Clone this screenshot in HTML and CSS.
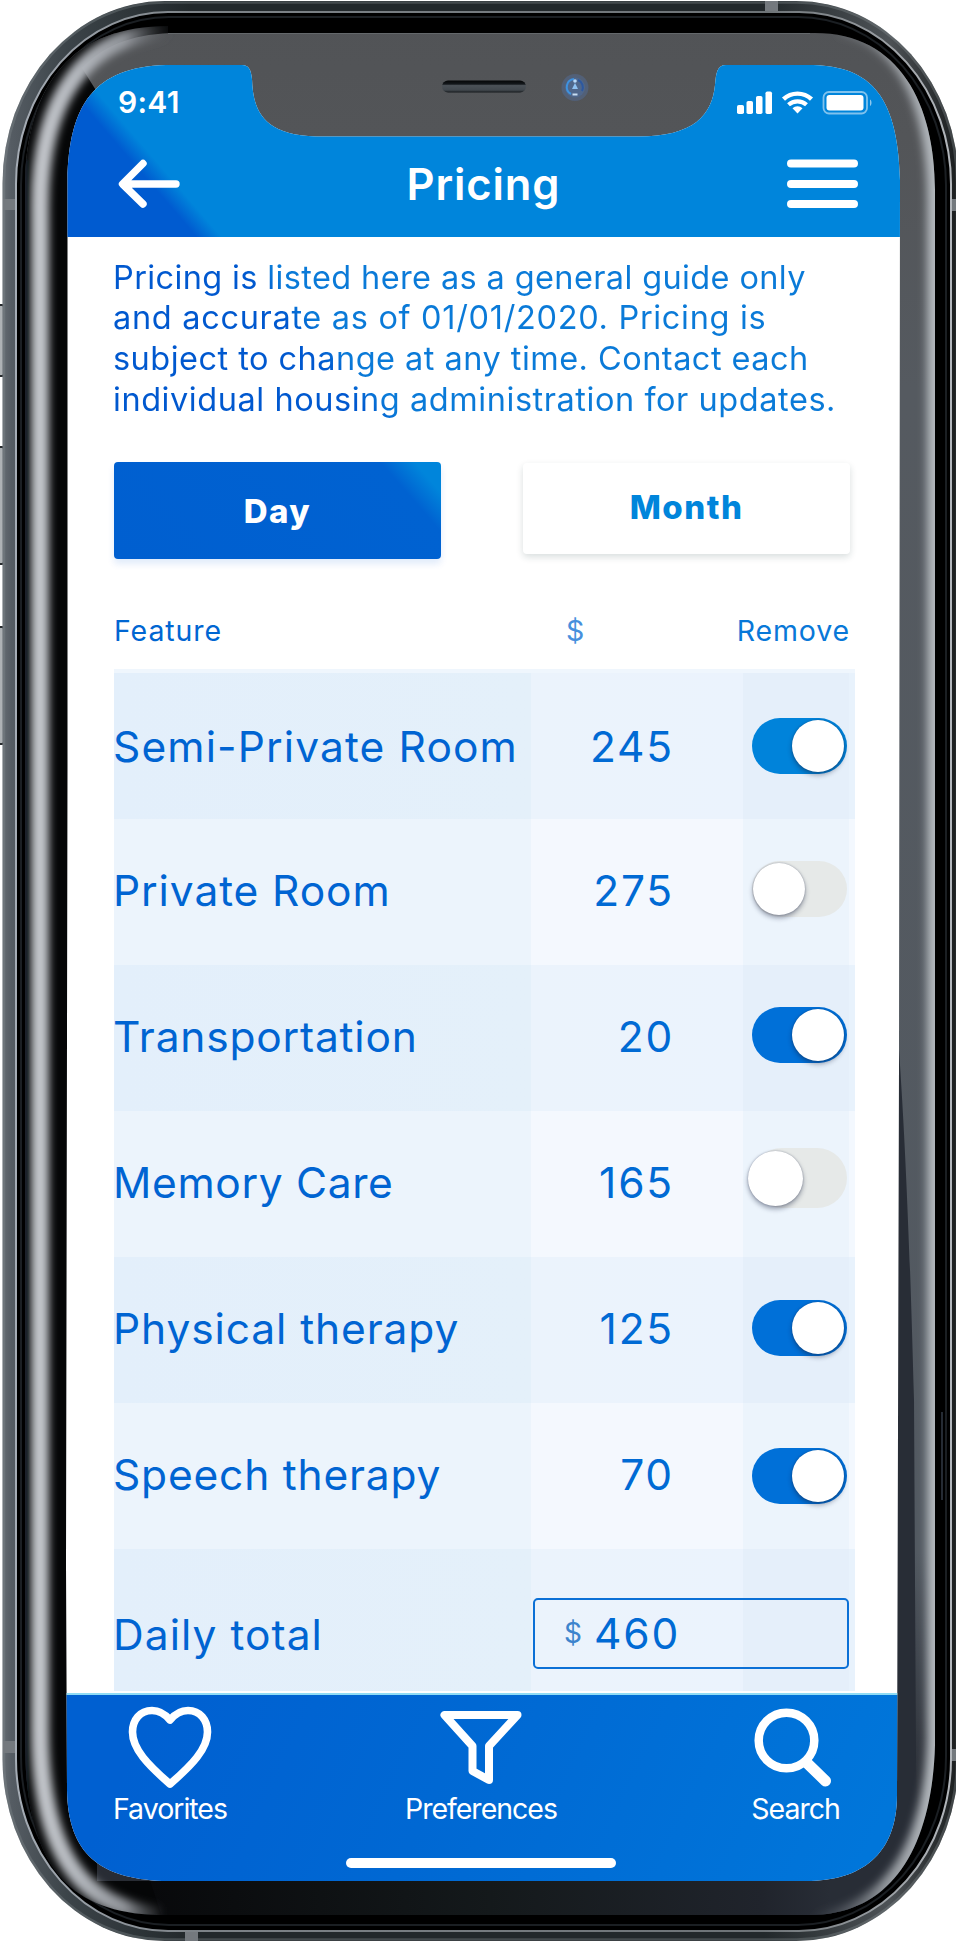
FILE: index.html
```html
<!DOCTYPE html>
<html lang="en">
<head>
<meta charset="utf-8">
<title>Pricing</title>
<link rel="stylesheet" href="styles.css">
</head>
<body>
<div class="phone">
  <svg class="frame" viewBox="0 0 956 1941" aria-hidden="true">
    <defs>
      <linearGradient id="metal" x1="0" x2="956" y1="0" y2="0" gradientUnits="userSpaceOnUse">
        <stop offset="0" stop-color="#6a7077"/><stop offset=".012" stop-color="#555c63"/>
        <stop offset=".07" stop-color="#3c4449"/><stop offset=".2" stop-color="#22282b"/>
        <stop offset=".8" stop-color="#22282b"/><stop offset=".93" stop-color="#4d5256"/><stop offset="1" stop-color="#1c1f20"/>
      </linearGradient>
      <linearGradient id="edge" x1="0" x2="956" y1="0" y2="0" gradientUnits="userSpaceOnUse">
        <stop offset="0" stop-color="#a9b0b9"/><stop offset=".2" stop-color="#7d8388"/>
        <stop offset=".8" stop-color="#6d7377"/><stop offset="1" stop-color="#b4b8bd"/>
      </linearGradient>
      <linearGradient id="bezel" x1="0" x2="0" y1="0" y2="1941" gradientUnits="userSpaceOnUse">
        <stop offset="0" stop-color="#515356"/><stop offset=".07" stop-color="#535558"/>
        <stop offset=".2" stop-color="#555a60"/><stop offset=".8" stop-color="#525961"/><stop offset=".93" stop-color="#282c34"/>
      </linearGradient>
      <linearGradient id="chin" x1="150" x2="830" y1="0" y2="0" gradientUnits="userSpaceOnUse">
        <stop offset="0" stop-color="#08090b"/><stop offset=".5" stop-color="#14191b"/><stop offset=".9" stop-color="#20242c"/><stop offset="1" stop-color="#282d36"/>
      </linearGradient>
      <linearGradient id="shineLeft" x1="40" x2="170" y1="0" y2="0" gradientUnits="userSpaceOnUse">
        <stop offset="0" stop-color="#c3c6cb"/><stop offset=".3" stop-color="#b4b8be"/><stop offset=".65" stop-color="#a0a4aa" stop-opacity=".9"/><stop offset="1" stop-color="#60646a" stop-opacity="0"/>
      </linearGradient>
      <linearGradient id="shineRight" x1="810" x2="936" y1="0" y2="0" gradientUnits="userSpaceOnUse">
        <stop offset="0" stop-color="#70757c" stop-opacity="0"/><stop offset=".6" stop-color="#a0a5aa" stop-opacity=".9"/><stop offset="1" stop-color="#b4b9be"/>
      </linearGradient>
      <linearGradient id="slot" x1="0" x2="0" y1="0" y2="1">
        <stop offset="0" stop-color="#050607"/><stop offset=".3" stop-color="#14181c"/><stop offset=".42" stop-color="#4b5157"/><stop offset=".8" stop-color="#42484e"/><stop offset="1" stop-color="#15191c"/>
      </linearGradient>
      <filter id="soft" x="-10%" y="-10%" width="120%" height="120%"><feGaussianBlur stdDeviation="4"/></filter>
      <filter id="fine" x="-10" y="0" width="80" height="1941" filterUnits="userSpaceOnUse"><feGaussianBlur stdDeviation="1"/></filter>
      <clipPath id="glass"><path d="M168 33H815C900 33 935 105 935 190V1745C932 1850 890 1915 810 1915H165C68 1915 25 1866 25 1740V190C25 80 76 26 168 26Z"/></clipPath>
    </defs>
    <g fill="#aeb2b5" stroke="#25292c" stroke-width="2">
      <rect x="-5" y="305" width="9" height="71" rx="2"/>
      <rect x="-5" y="447" width="9" height="117" rx="2"/>
      <rect x="-5" y="627" width="9" height="117" rx="2"/>
    </g>
    <rect x="2.500" y="1" width="956" height="1940" rx="162" ry="182" fill="url(#metal)"/>
    <rect x="4" y="2.500" width="953" height="1937" rx="160" ry="180" fill="none" stroke="#858b90" stroke-width="2.500" opacity=".35"/>
    <g fill="#74797e">
      <rect x="3" y="199" width="12" height="11"/><rect x="3" y="1741" width="12" height="12"/>
      <rect x="765" y="1" width="13" height="11"/><rect x="185" y="1931" width="13" height="10"/>
      <rect x="952" y="199" width="4" height="12"/><rect x="949" y="1749" width="7" height="12"/>
    </g>
    <rect x="16" y="12" width="935" height="1919" rx="152" ry="172" fill="#000" stroke="url(#edge)" stroke-width="2"/>
    <rect x="21" y="17" width="925" height="1908" rx="148" ry="168" fill="none" stroke="#1b1f23" stroke-width="2"/>
    <path d="M942 1412V1500" stroke="#252b34" stroke-width="2"/>
    <g clip-path="url(#glass)">
      <path d="M0 33H956V1941H0Z" fill="url(#bezel)"/>
      <path d="M0 1881H956V1941H0Z" fill="url(#chin)"/>
      <path d="M0 0H170V33C130 35 103 46 82 68L97 92V1881H150L170 1941H0Z" fill="#050607"/>
      <path d="M898 1035C901 1080 908 1170 914 1400L917 1941H830V1860H880Z" fill="#282d36"/>
      <path d="M175 30C84 32 40 100 40 205V1730C40 1856 84 1908 160 1916" fill="none" stroke="url(#shineLeft)" stroke-width="18" filter="url(#soft)"/>
      <path d="M25 160V1800" stroke="#1c222b" stroke-width="5" filter="url(#fine)"/>
      <path d="M840 26C908 36 936 110 936 200V1740C932 1850 890 1912 815 1922" fill="none" stroke="url(#shineRight)" stroke-width="18" filter="url(#soft)"/>
    </g>
    <path d="M168 33.500H810" stroke="#64686b" stroke-width="1"/>
    <rect x="442" y="80.500" width="84" height="12" rx="6" fill="url(#slot)"/>
    <circle cx="575" cy="87.500" r="13.500" fill="#526077"/>
    <circle cx="575" cy="87.500" r="10" fill="#4f678c"/>
    <path d="M574 79A8 8 0 0 0 571 94" fill="none" stroke="#3e92df" stroke-width="2"/>
    <path d="M578 80A8 8 0 0 1 582 91" fill="none" stroke="#2c58a0" stroke-width="2"/>
    <circle cx="575" cy="81" r="1.800" fill="#b7d9fa"/><path d="M572 89L575 83L578 89Z" fill="#8fc2f3"/><path d="M572.500 94.500H577.500" stroke="#c7ddf2" stroke-width="2"/>
  </svg>

  <main class="screen">
    <header class="header">
      <div class="status">
        <span class="clock">9:41</span>
        <svg class="signals" viewBox="0 0 136 24" aria-hidden="true">
          <g fill="#fff">
            <rect x="0" y="14" width="7" height="9" rx="1.800"/><rect x="9.500" y="10" width="6.500" height="13" rx="1.800"/>
            <rect x="19" y="5" width="6.500" height="18" rx="1.800"/><rect x="28.500" y="0.500" width="6.500" height="22.500" rx="1.800"/>
            <path d="M60.500 22.500L55.500 17.200A7.500 7.500 0 0 1 65.500 17.200Z"/>
            <rect x="89.500" y="4" width="37" height="15.500" rx="3"/>
            <path d="M133 8.500C135 9.500 135 14 133 15Z" opacity=".55"/>
          </g>
          <g fill="none" stroke="#fff">
            <path d="M46.500 8.200A20.300 20.300 0 0 1 74.500 8.200" stroke-width="4.400"/>
            <path d="M51.500 13.800A13.500 13.500 0 0 1 69.500 13.800" stroke-width="4.200"/>
            <rect x="86.500" y="1" width="43.500" height="21.500" rx="5.500" stroke-width="1.800" opacity=".5"/>
          </g>
        </svg>
      </div>
      <div class="titlebar">
        <svg class="back" viewBox="0 0 62 50" fill="none" stroke="#fff" stroke-width="7.400" stroke-linecap="round" stroke-linejoin="round" aria-label="Back"><path d="M25 4.500L4.500 25L25 45M5 25H58"/></svg>
        <h1 class="title">Pricing</h1>
        <svg class="menu" viewBox="0 0 72 50" stroke="#fff" stroke-width="8" stroke-linecap="round" aria-label="Menu"><path d="M4 4.500H67M4 25H67M4 45H67"/></svg>
      </div>
    </header>

    <section class="content">
      <p class="intro"><span class="l1">Pricing is listed here as a general guide only</span><br><span class="l2">and accurate as of 01/01/2020. Pricing is</span><br><span class="l3">subject to change at any time. Contact each</span><br><span class="l4">individual housing administration for updates.</span></p>
      <div class="periods">
        <button class="period period-on">Day</button>
        <button class="period period-off">Month</button>
      </div>
      <div class="heads"><span class="head-feature">Feature</span><span class="head-price">$</span><span class="head-remove">Remove</span></div>
      <div class="table">
        <div class="row odd"><span class="name n1">Semi-Private Room</span><span class="price">245</span><span class="cell"><i class="toggle on light"></i></span></div>
        <div class="row"><span class="name n2">Private Room</span><span class="price">275</span><span class="cell up"><i class="toggle"></i></span></div>
        <div class="row odd"><span class="name n3">Transportation</span><span class="price">20</span><span class="cell up"><i class="toggle on"></i></span></div>
        <div class="row"><span class="name n4">Memory Care</span><span class="price">165</span><span class="cell higher"><i class="toggle wide"></i></span></div>
        <div class="row odd"><span class="name n5">Physical therapy</span><span class="price">125</span><span class="cell up"><i class="toggle on"></i></span></div>
        <div class="row"><span class="name n6">Speech therapy</span><span class="price">70</span><span class="cell"><i class="toggle on"></i></span></div>
        <div class="row odd total"><span class="name n7">Daily total</span><div class="sum"><span class="currency">$</span><span class="amount">460</span></div></div>
      </div>
    </section>

    <nav class="tabs">
      <a class="tab">
        <svg class="icon" viewBox="0 0 84 84" fill="none" stroke="#fff" stroke-width="7.600" stroke-linejoin="round"><path d="M42 14C37 8 32 4.500 24 4.500C12 4.500 4.500 14 4.500 26C4.500 43 20 59 42 78C64 59 79.500 43 79.500 26C79.500 14 72 4.500 60 4.500C52 4.500 47 8 42 14Z"/></svg>
        <span class="tab-label t1">Favorites</span>
      </a>
      <a class="tab tab-mid">
        <svg class="icon" viewBox="0 0 84 84" fill="none" stroke="#fff" stroke-width="8" stroke-linejoin="round"><path d="M5.500 9H78.500L50 40V74L33.500 65V40Z"/></svg>
        <span class="tab-label t2">Preferences</span>
      </a>
      <a class="tab tab-end">
        <svg class="icon" viewBox="0 0 84 84" fill="none" stroke="#fff" stroke-linecap="round"><circle cx="34.500" cy="34.500" r="27.800" stroke-width="8.500"/><path d="M56 58L73.500 75" stroke-width="11"/></svg>
        <span class="tab-label t3">Search</span>
      </a>
      <div class="home"></div>
    </nav>
  </main>
</div>
</body>
</html>
```
FILE: styles.css
```css
* { box-sizing: border-box; }
body { margin: 0; background: #fff; font-family: Inter, "Liberation Sans", sans-serif; }

.phone { position: relative; width: 956px; height: 1941px; padding: 65px 56px 60px 66px; overflow: hidden; }
.frame { position: absolute; left: 0; top: 0; width: 956px; height: 1941px; }

.screen {
  position: relative;
  display: flex;
  flex-direction: column;
  width: 834px;
  height: 1816px;
  background: #fff;
  clip-path: path("M1.500 115C3 40 28 2 100 0H176C183 0 185 5 186 14C187 42 194 70 250 71.500H570C628 72 646 50 649 20C650 8 651 0 660 0H742C800 0 832 25 834 115L833 1000L831 1730C831 1790 795 1816 740 1816H96C35 1813 2 1790 1 1725L0 1500L1.500 700Z");
}

.header {
  flex: none;
  height: 171.500px;
  padding: 20px 38px 0 52px;
  color: #fff;
  background: linear-gradient(49.300deg, #005bd0 99px, #0085db 118px);
}
.status { display: flex; justify-content: space-between; height: 36px; }
.clock { font-size: 30px; font-weight: 600; line-height: 35px; letter-spacing: .300px; }
.signals { flex: none; width: 136px; height: 24px; margin: 6px -11px 0 0; }
.titlebar { display: flex; align-items: center; justify-content: space-between; margin-top: 30px; height: 66px; padding-right: 3px; }
.back { width: 62px; height: 50px; }
.menu { width: 72px; height: 50px; }
.title { margin: 0; font-size: 43.500px; font-weight: 600; line-height: 66px; letter-spacing: .900px; }

.content { flex: none; height: 1456.500px; padding: 21px 45px 0 48px; }
.intro {
  margin: 0 -20px 0 -1px;
  font-size: 32.500px;
  font-weight: 400;
  line-height: 40.800px;
  white-space: nowrap;
  color: transparent;
  background: linear-gradient(49.300deg, #0058cf 196px, #0a7ad8 220px);
  -webkit-background-clip: text;
  background-clip: text;
}
.l1 { letter-spacing: .370px; }
.l2 { letter-spacing: .680px; }
.l3 { letter-spacing: .470px; }
.l4 { letter-spacing: .550px; }

.periods { display: flex; justify-content: space-between; align-items: flex-start; height: 99px; margin-top: 41px; padding-right: 5px; }
.period { border: 0; width: 327px; border-radius: 4px; padding: 0; font: 800 33px/40px Inter, sans-serif; letter-spacing: 1.500px; }
.period-on { height: 97px; padding-top: 1px; color: #fff; background: linear-gradient(229deg, #0085db 20px, #0062d1 46px, #005fd0); box-shadow: 0 5px 7px rgba(0, 90, 210, .12); }
.period-off { height: 91px; margin-top: 1px; padding-bottom: 2px; color: #0085db; background: #fff; box-shadow: 0 3px 7px rgba(20, 50, 50, .16); }

.heads { display: flex; height: 40px; margin-top: 50px; padding-right: 5px; font-size: 28.500px; line-height: 39px; color: #0066d2; letter-spacing: .900px; }
.head-feature { width: 452px; }
.head-price { color: #4790dd; }
.head-remove { margin-left: auto; color: #0878d8; letter-spacing: .850px; }

.table { width: 741px; margin-top: 18px; border-top: 4px solid #eff6fd; }
.row {
  display: grid;
  grid-template-columns: 417px 212px 112px;
  height: 146.100px;
  line-height: 144.500px;
  font-size: 42.500px;
  font-weight: 400;
  color: #0064d2;
  background: linear-gradient(90deg, #ecf4fc 417px, #f4f8fe 417px, #f4f8fe 629px, #ecf4fc 629px, #ecf4fc 735px, #f3f8fe 735px);
}
.row:first-child { line-height: 147px; }
.row.odd { background: linear-gradient(90deg, #e3effb, #e4f0fa 417px, #ebf3fc 417px, #ebf3fd 629px, #e5effa 629px, #e5effa 735px, #e8f2fc 735px); }
.name { margin-left: -1px; white-space: nowrap; letter-spacing: .800px; }
.n1 { letter-spacing: 1.120px; }
.n2, .n5 { letter-spacing: .900px; }
.n4 { letter-spacing: .650px; }
.n7 { letter-spacing: 1.050px; }
.price { text-align: right; padding-right: 69px; letter-spacing: 1.800px; color: #006ad4; }
.cell { display: flex; align-items: center; padding-left: 9px; }
.cell.up { padding-bottom: 5px; }
.cell.higher { padding-bottom: 12px; }

.toggle { display: flex; align-items: center; width: 94.500px; height: 56px; padding: 0 1px; border-radius: 28px; background: #e6e9e8; }
.toggle::before { content: ""; width: 52px; height: 52px; border-radius: 50%; background: #fff; box-shadow: 0 3px 5px rgba(20, 30, 60, .4), 0 0 2px rgba(20, 30, 60, .35); }
.toggle.on { justify-content: flex-end; padding-right: 3px; background: #0070d8; }
.toggle.on.light { background: #0083da; }
.toggle.wide { height: 60px; border-radius: 30px; }
.toggle.wide::before { width: 55px; height: 55px; margin-left: -5px; }

.row.total { height: 142px; grid-template-columns: 419px 316px; line-height: 171px; }
.sum { display: flex; align-items: center; height: 71px; margin-top: 49px; padding-left: 29px; border: 2px solid #0b70d6; border-radius: 5px; line-height: 67px; }
.currency { font-size: 28px; line-height: 67px; color: #3d84cd; }
.amount { margin-left: 12px; letter-spacing: 1.900px; color: #006ad4; }

.tabs {
  flex: 1;
  display: grid;
  grid-template-columns: 226px 1fr 226px;
  grid-template-rows: 163px 10px;
  padding: 0;
  color: #fff;
  border-top: 2px solid #8fdcf5;
  background: linear-gradient(115deg, #0060d1 10%, #0068d3 45%, #0076da 95%);
}
.tab { display: flex; flex-direction: column; align-items: center; padding: 11px 18px 0 0; }
.tab-mid { padding-right: 4px; }
.tab-end { padding-right: 0; padding-left: 13px; }
.icon { width: 84px; height: 84px; flex: none; }
.tab-label { font-size: 28.500px; line-height: 37px; margin-top: 0; letter-spacing: -1px; }
.t3 { margin-left: 4px; }
.home { grid-column: 1 / 4; justify-self: center; width: 270px; height: 10px; margin-right: 4px; border-radius: 5px; background: #fff; }
```
